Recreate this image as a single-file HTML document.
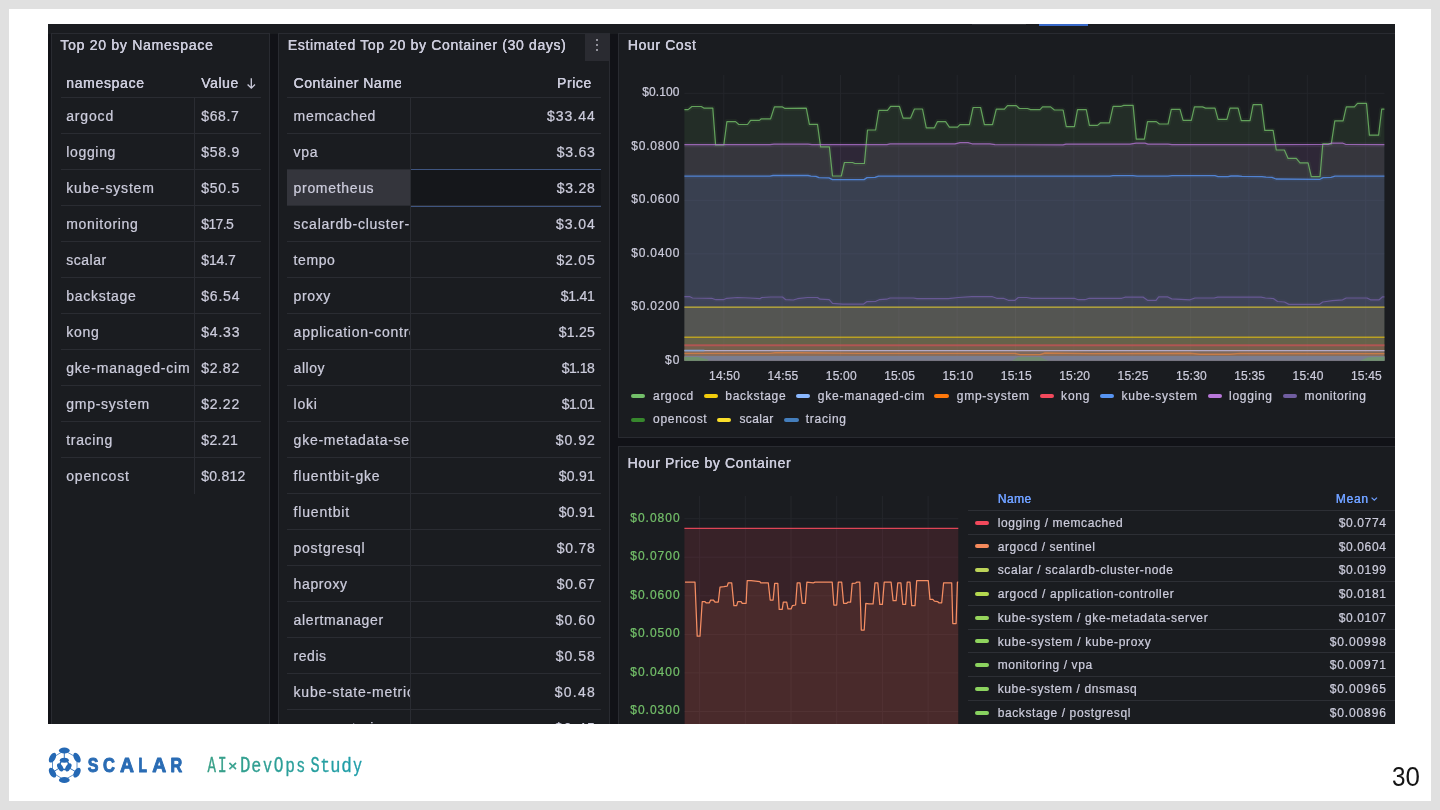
<!DOCTYPE html>
<html><head><meta charset="utf-8"><title>slide 30</title>
<style>
html,body{margin:0;padding:0;}
body{width:1440px;height:810px;overflow:hidden;background:#e0e0e0;font-family:"Liberation Sans",sans-serif;position:relative;}
#slide{position:absolute;left:9px;top:9px;width:1422px;height:792px;background:#fff;}
#shot{position:absolute;left:48px;top:24px;width:1347px;height:700px;overflow:hidden;background:#111217;}
#in{position:absolute;left:-48px;top:-24px;width:1440px;height:810px;will-change:transform;}
.t{position:absolute;white-space:nowrap;-webkit-text-stroke:0.22px currentColor;}
.r{position:absolute;}
.p{position:absolute;background:#1a1c20;border:1px solid #292b31;box-sizing:border-box;}
svg{position:absolute;left:0;top:0;overflow:visible;}
</style></head><body>
<div id="slide"></div>
<div id="shot"><div id="in">
<div class="r" style="left:48.00px;top:24.00px;width:1347.00px;height:9.50px;background:#1a1c20;"></div>
<div class="r" style="left:972.00px;top:24.00px;width:54.00px;height:1.30px;background:#2f3136;"></div>
<div class="r" style="left:1038.80px;top:24.00px;width:49.00px;height:1.50px;background:#3869c9;"></div>
<div class="p" style="left:51px;top:33px;width:219px;height:720px;"></div>
<div class="p" style="left:278px;top:33px;width:332px;height:720px;"></div>
<div class="p" style="left:618px;top:33px;width:800px;height:405px;"></div>
<div class="p" style="left:618px;top:445.5px;width:800px;height:320px;"></div>
<div class="t" style="top:35.30px;font-size:14px;line-height:20px;color:#ccccdc;letter-spacing:0.733px;left:60.30px;text-shadow:0.12px 0 0 currentColor;">Top 20 by Namespace</div>
<div class="t" style="top:35.30px;font-size:14px;line-height:20px;color:#ccccdc;letter-spacing:0.646px;left:287.80px;text-shadow:0.12px 0 0 currentColor;">Estimated Top 20 by Container (30 days)</div>
<div class="t" style="top:35.30px;font-size:14px;line-height:20px;color:#ccccdc;letter-spacing:0.622px;left:627.80px;text-shadow:0.12px 0 0 currentColor;">Hour Cost</div>
<div class="t" style="top:453.30px;font-size:14px;line-height:20px;color:#ccccdc;letter-spacing:0.618px;left:627.60px;text-shadow:0.12px 0 0 currentColor;">Hour Price by Container</div>
<div class="r" style="left:585.30px;top:34.00px;width:24.50px;height:26.50px;background:#2a2b31;"></div>
<div class="r" style="left:596.00px;top:39.20px;width:2.10px;height:2.10px;background:#b4b4be;border-radius:1px;"></div>
<div class="r" style="left:596.00px;top:44.00px;width:2.10px;height:2.10px;background:#b4b4be;border-radius:1px;"></div>
<div class="r" style="left:596.00px;top:48.80px;width:2.10px;height:2.10px;background:#b4b4be;border-radius:1px;"></div>
<div class="t" style="top:73.00px;font-size:14px;line-height:20px;color:#ccccdc;letter-spacing:0.677px;left:66.20px;text-shadow:0.12px 0 0 currentColor;">namespace</div>
<div class="t" style="top:73.00px;font-size:14px;line-height:20px;color:#ccccdc;letter-spacing:0.580px;left:201.20px;text-shadow:0.12px 0 0 currentColor;">Value</div>
<svg width="1440" height="810" viewBox="0 0 1440 810"><path d="M251.3 78.3 V88 M247.6 84.5 L251.3 88.2 L255 84.5" fill="none" stroke="#ccccdc" stroke-width="1.3"/></svg>
<div class="t" style="top:106.05px;font-size:14px;line-height:20px;color:#ccccdc;letter-spacing:0.838px;left:66.20px;">argocd</div>
<div class="t" style="top:106.05px;font-size:14px;line-height:20px;color:#ccccdc;letter-spacing:0.666px;left:201.20px;">$68.7</div>
<div class="t" style="top:142.05px;font-size:14px;line-height:20px;color:#ccccdc;letter-spacing:0.674px;left:66.20px;">logging</div>
<div class="t" style="top:142.05px;font-size:14px;line-height:20px;color:#ccccdc;letter-spacing:0.741px;left:201.20px;">$58.9</div>
<div class="t" style="top:178.05px;font-size:14px;line-height:20px;color:#ccccdc;letter-spacing:0.834px;left:66.20px;">kube-system</div>
<div class="t" style="top:178.05px;font-size:14px;line-height:20px;color:#ccccdc;letter-spacing:0.741px;left:201.20px;">$50.5</div>
<div class="t" style="top:214.05px;font-size:14px;line-height:20px;color:#ccccdc;letter-spacing:0.704px;left:66.20px;">monitoring</div>
<div class="t" style="top:214.05px;font-size:14px;line-height:20px;color:#ccccdc;letter-spacing:-0.584px;left:201.20px;">$17.5</div>
<div class="t" style="top:250.05px;font-size:14px;line-height:20px;color:#ccccdc;letter-spacing:0.531px;left:66.20px;">scalar</div>
<div class="t" style="top:250.05px;font-size:14px;line-height:20px;color:#ccccdc;letter-spacing:-0.084px;left:201.20px;">$14.7</div>
<div class="t" style="top:286.05px;font-size:14px;line-height:20px;color:#ccccdc;letter-spacing:0.735px;left:66.20px;">backstage</div>
<div class="t" style="top:286.05px;font-size:14px;line-height:20px;color:#ccccdc;letter-spacing:0.816px;left:201.20px;">$6.54</div>
<div class="t" style="top:322.05px;font-size:14px;line-height:20px;color:#ccccdc;letter-spacing:0.714px;left:66.20px;">kong</div>
<div class="t" style="top:322.05px;font-size:14px;line-height:20px;color:#ccccdc;letter-spacing:0.816px;left:201.20px;">$4.33</div>
<div class="t" style="top:358.05px;font-size:14px;line-height:20px;color:#ccccdc;letter-spacing:0.818px;left:66.20px;">gke-managed-cim</div>
<div class="t" style="top:358.05px;font-size:14px;line-height:20px;color:#ccccdc;letter-spacing:0.741px;left:201.20px;">$2.82</div>
<div class="t" style="top:394.05px;font-size:14px;line-height:20px;color:#ccccdc;letter-spacing:0.750px;left:66.20px;">gmp-system</div>
<div class="t" style="top:394.05px;font-size:14px;line-height:20px;color:#ccccdc;letter-spacing:0.741px;left:201.20px;">$2.22</div>
<div class="t" style="top:430.05px;font-size:14px;line-height:20px;color:#ccccdc;letter-spacing:0.696px;left:66.20px;">tracing</div>
<div class="t" style="top:430.05px;font-size:14px;line-height:20px;color:#ccccdc;letter-spacing:0.416px;left:201.20px;">$2.21</div>
<div class="t" style="top:466.05px;font-size:14px;line-height:20px;color:#ccccdc;letter-spacing:0.854px;left:66.20px;">opencost</div>
<div class="t" style="top:466.05px;font-size:14px;line-height:20px;color:#ccccdc;letter-spacing:0.276px;left:201.20px;">$0.812</div>
<div class="r" style="left:61.00px;top:97.20px;width:200.00px;height:1.00px;background:#2a2c32;"></div>
<div class="r" style="left:61.00px;top:133.20px;width:200.00px;height:1.00px;background:#2a2c32;"></div>
<div class="r" style="left:61.00px;top:169.20px;width:200.00px;height:1.00px;background:#2a2c32;"></div>
<div class="r" style="left:61.00px;top:205.20px;width:200.00px;height:1.00px;background:#2a2c32;"></div>
<div class="r" style="left:61.00px;top:241.20px;width:200.00px;height:1.00px;background:#2a2c32;"></div>
<div class="r" style="left:61.00px;top:277.20px;width:200.00px;height:1.00px;background:#2a2c32;"></div>
<div class="r" style="left:61.00px;top:313.20px;width:200.00px;height:1.00px;background:#2a2c32;"></div>
<div class="r" style="left:61.00px;top:349.20px;width:200.00px;height:1.00px;background:#2a2c32;"></div>
<div class="r" style="left:61.00px;top:385.20px;width:200.00px;height:1.00px;background:#2a2c32;"></div>
<div class="r" style="left:61.00px;top:421.20px;width:200.00px;height:1.00px;background:#2a2c32;"></div>
<div class="r" style="left:61.00px;top:457.20px;width:200.00px;height:1.00px;background:#2a2c32;"></div>
<div class="r" style="left:194.00px;top:97.70px;width:1.00px;height:396.00px;background:#2a2c32;"></div>
<div class="r" style="left:287.00px;top:169.50px;width:123.50px;height:36.50px;background:#34353c;"></div>
<div class="r" style="left:410.50px;top:169.50px;width:190.50px;height:36.50px;background:#15171b;"></div>
<div class="r" style="left:287px;top:60px;width:123.3px;height:700px;overflow:hidden;">
<div class="r" style="left:0;top:0;width:114.2px;height:40px;overflow:hidden;">
<div class="t" style="top:13.00px;font-size:14px;line-height:20px;color:#ccccdc;letter-spacing:0.504px;left:6.60px;text-shadow:0.12px 0 0 currentColor;">Container Name</div>
</div>
<div class="t" style="top:46.05px;font-size:14px;line-height:20px;color:#ccccdc;letter-spacing:0.693px;left:6.60px;">memcached</div>
<div class="t" style="top:82.05px;font-size:14px;line-height:20px;color:#ccccdc;letter-spacing:0.714px;left:6.60px;">vpa</div>
<div class="t" style="top:118.05px;font-size:14px;line-height:20px;color:#ccccdc;letter-spacing:0.674px;left:6.60px;">prometheus</div>
<div class="t" style="top:154.05px;font-size:14px;line-height:20px;color:#ccccdc;letter-spacing:0.751px;left:6.60px;">scalardb-cluster-</div>
<div class="t" style="top:190.05px;font-size:14px;line-height:20px;color:#ccccdc;letter-spacing:0.597px;left:6.60px;">tempo</div>
<div class="t" style="top:226.05px;font-size:14px;line-height:20px;color:#ccccdc;letter-spacing:0.616px;left:6.60px;">proxy</div>
<div class="t" style="top:262.05px;font-size:14px;line-height:20px;color:#ccccdc;letter-spacing:0.750px;left:6.60px;">application-contro</div>
<div class="t" style="top:298.05px;font-size:14px;line-height:20px;color:#ccccdc;letter-spacing:0.551px;left:6.60px;">alloy</div>
<div class="t" style="top:334.05px;font-size:14px;line-height:20px;color:#ccccdc;letter-spacing:0.750px;left:6.60px;">loki</div>
<div class="t" style="top:370.05px;font-size:14px;line-height:20px;color:#ccccdc;letter-spacing:0.750px;left:6.60px;">gke-metadata-se</div>
<div class="t" style="top:406.05px;font-size:14px;line-height:20px;color:#ccccdc;letter-spacing:0.811px;left:6.60px;">fluentbit-gke</div>
<div class="t" style="top:442.05px;font-size:14px;line-height:20px;color:#ccccdc;letter-spacing:0.808px;left:6.60px;">fluentbit</div>
<div class="t" style="top:478.05px;font-size:14px;line-height:20px;color:#ccccdc;letter-spacing:0.712px;left:6.60px;">postgresql</div>
<div class="t" style="top:514.05px;font-size:14px;line-height:20px;color:#ccccdc;letter-spacing:0.615px;left:6.60px;">haproxy</div>
<div class="t" style="top:550.05px;font-size:14px;line-height:20px;color:#ccccdc;letter-spacing:0.637px;left:6.60px;">alertmanager</div>
<div class="t" style="top:586.05px;font-size:14px;line-height:20px;color:#ccccdc;letter-spacing:0.538px;left:6.60px;">redis</div>
<div class="t" style="top:622.05px;font-size:14px;line-height:20px;color:#ccccdc;letter-spacing:0.760px;left:6.60px;">kube-state-metrics</div>
<div class="t" style="top:658.05px;font-size:14px;line-height:20px;color:#ccccdc;letter-spacing:0.750px;left:6.60px;">opencost-ui</div>
</div>
<div class="t" style="top:73.00px;font-size:14px;line-height:20px;color:#ccccdc;letter-spacing:0.580px;right:848.22px;text-shadow:0.12px 0 0 currentColor;">Price</div>
<div class="t" style="top:106.05px;font-size:14px;line-height:20px;color:#ccccdc;letter-spacing:0.996px;right:844.30px;">$33.44</div>
<div class="t" style="top:142.05px;font-size:14px;line-height:20px;color:#ccccdc;letter-spacing:0.741px;right:844.56px;">$3.63</div>
<div class="t" style="top:178.05px;font-size:14px;line-height:20px;color:#ccccdc;letter-spacing:0.741px;right:844.56px;">$3.28</div>
<div class="t" style="top:214.05px;font-size:14px;line-height:20px;color:#ccccdc;letter-spacing:0.891px;right:844.41px;">$3.04</div>
<div class="t" style="top:250.05px;font-size:14px;line-height:20px;color:#ccccdc;letter-spacing:0.816px;right:844.48px;">$2.05</div>
<div class="t" style="top:286.05px;font-size:14px;line-height:20px;color:#ccccdc;letter-spacing:-0.259px;right:845.56px;">$1.41</div>
<div class="t" style="top:322.05px;font-size:14px;line-height:20px;color:#ccccdc;letter-spacing:0.241px;right:845.06px;">$1.25</div>
<div class="t" style="top:358.05px;font-size:14px;line-height:20px;color:#ccccdc;letter-spacing:-0.509px;right:845.81px;">$1.18</div>
<div class="t" style="top:394.05px;font-size:14px;line-height:20px;color:#ccccdc;letter-spacing:-0.509px;right:845.81px;">$1.01</div>
<div class="t" style="top:430.05px;font-size:14px;line-height:20px;color:#ccccdc;letter-spacing:0.991px;right:844.31px;">$0.92</div>
<div class="t" style="top:466.05px;font-size:14px;line-height:20px;color:#ccccdc;letter-spacing:0.241px;right:845.06px;">$0.91</div>
<div class="t" style="top:502.05px;font-size:14px;line-height:20px;color:#ccccdc;letter-spacing:0.241px;right:845.06px;">$0.91</div>
<div class="t" style="top:538.05px;font-size:14px;line-height:20px;color:#ccccdc;letter-spacing:0.741px;right:844.56px;">$0.78</div>
<div class="t" style="top:574.05px;font-size:14px;line-height:20px;color:#ccccdc;letter-spacing:0.741px;right:844.56px;">$0.67</div>
<div class="t" style="top:610.05px;font-size:14px;line-height:20px;color:#ccccdc;letter-spacing:0.991px;right:844.31px;">$0.60</div>
<div class="t" style="top:646.05px;font-size:14px;line-height:20px;color:#ccccdc;letter-spacing:0.991px;right:844.31px;">$0.58</div>
<div class="t" style="top:682.05px;font-size:14px;line-height:20px;color:#ccccdc;letter-spacing:1.241px;right:844.06px;">$0.48</div>
<div class="t" style="top:718.05px;font-size:14px;line-height:20px;color:#ccccdc;letter-spacing:1.241px;right:844.06px;">$0.45</div>
<div class="r" style="left:287.00px;top:97.20px;width:314.00px;height:1.00px;background:#2a2c32;"></div>
<div class="r" style="left:287.00px;top:133.20px;width:314.00px;height:1.00px;background:#2a2c32;"></div>
<div class="r" style="left:287.00px;top:169.20px;width:314.00px;height:1.00px;background:#2a2c32;"></div>
<div class="r" style="left:287.00px;top:205.20px;width:314.00px;height:1.00px;background:#2a2c32;"></div>
<div class="r" style="left:287.00px;top:241.20px;width:314.00px;height:1.00px;background:#2a2c32;"></div>
<div class="r" style="left:287.00px;top:277.20px;width:314.00px;height:1.00px;background:#2a2c32;"></div>
<div class="r" style="left:287.00px;top:313.20px;width:314.00px;height:1.00px;background:#2a2c32;"></div>
<div class="r" style="left:287.00px;top:349.20px;width:314.00px;height:1.00px;background:#2a2c32;"></div>
<div class="r" style="left:287.00px;top:385.20px;width:314.00px;height:1.00px;background:#2a2c32;"></div>
<div class="r" style="left:287.00px;top:421.20px;width:314.00px;height:1.00px;background:#2a2c32;"></div>
<div class="r" style="left:287.00px;top:457.20px;width:314.00px;height:1.00px;background:#2a2c32;"></div>
<div class="r" style="left:287.00px;top:493.20px;width:314.00px;height:1.00px;background:#2a2c32;"></div>
<div class="r" style="left:287.00px;top:529.20px;width:314.00px;height:1.00px;background:#2a2c32;"></div>
<div class="r" style="left:287.00px;top:565.20px;width:314.00px;height:1.00px;background:#2a2c32;"></div>
<div class="r" style="left:287.00px;top:601.20px;width:314.00px;height:1.00px;background:#2a2c32;"></div>
<div class="r" style="left:287.00px;top:637.20px;width:314.00px;height:1.00px;background:#2a2c32;"></div>
<div class="r" style="left:287.00px;top:673.20px;width:314.00px;height:1.00px;background:#2a2c32;"></div>
<div class="r" style="left:287.00px;top:709.20px;width:314.00px;height:1.00px;background:#2a2c32;"></div>
<div class="r" style="left:287.00px;top:745.20px;width:314.00px;height:1.00px;background:#2a2c32;"></div>
<div class="r" style="left:410.00px;top:97.70px;width:1.00px;height:700.00px;background:#2a2c32;"></div>
<div class="r" style="left:410.50px;top:169.20px;width:190.50px;height:1.10px;background:#3f5580;"></div>
<div class="r" style="left:410.50px;top:205.60px;width:190.50px;height:1.10px;background:#3f5580;"></div>
<svg width="1440" height="810" viewBox="0 0 1440 810">
<line x1="684.4" y1="360.8" x2="1384.5" y2="360.8" stroke="#24262b" stroke-width="1"/>
<line x1="684.4" y1="307.3" x2="1384.5" y2="307.3" stroke="#24262b" stroke-width="1"/>
<line x1="684.4" y1="253.8" x2="1384.5" y2="253.8" stroke="#24262b" stroke-width="1"/>
<line x1="684.4" y1="200.3" x2="1384.5" y2="200.3" stroke="#24262b" stroke-width="1"/>
<line x1="684.4" y1="146.8" x2="1384.5" y2="146.8" stroke="#24262b" stroke-width="1"/>
<line x1="684.4" y1="93.3" x2="1384.5" y2="93.3" stroke="#24262b" stroke-width="1"/>
<line x1="723.8" y1="75" x2="723.8" y2="360.8" stroke="#24262b" stroke-width="1"/>
<line x1="782.1" y1="75" x2="782.1" y2="360.8" stroke="#24262b" stroke-width="1"/>
<line x1="840.5" y1="75" x2="840.5" y2="360.8" stroke="#24262b" stroke-width="1"/>
<line x1="898.8" y1="75" x2="898.8" y2="360.8" stroke="#24262b" stroke-width="1"/>
<line x1="957.2" y1="75" x2="957.2" y2="360.8" stroke="#24262b" stroke-width="1"/>
<line x1="1015.5" y1="75" x2="1015.5" y2="360.8" stroke="#24262b" stroke-width="1"/>
<line x1="1073.9" y1="75" x2="1073.9" y2="360.8" stroke="#24262b" stroke-width="1"/>
<line x1="1132.2" y1="75" x2="1132.2" y2="360.8" stroke="#24262b" stroke-width="1"/>
<line x1="1190.6" y1="75" x2="1190.6" y2="360.8" stroke="#24262b" stroke-width="1"/>
<line x1="1248.9" y1="75" x2="1248.9" y2="360.8" stroke="#24262b" stroke-width="1"/>
<line x1="1307.3" y1="75" x2="1307.3" y2="360.8" stroke="#24262b" stroke-width="1"/>
<line x1="1365.7" y1="75" x2="1365.7" y2="360.8" stroke="#24262b" stroke-width="1"/>
<polygon points="684.4,109.6 688.1,109.6 691.9,106.5 701.3,106.5 703.8,108.1 712.8,108.1 715.6,145.0 723.8,145.0 726.9,121.6 735.6,121.6 738.8,124.5 747.5,124.5 750.6,120.4 759.4,120.4 761.3,118.8 770.6,118.8 774.4,106.9 782.5,106.9 785.0,108.4 806.3,108.1 809.4,124.4 817.5,124.4 820.6,146.9 829.4,146.9 832.5,176.0 841.3,176.0 844.4,162.5 852.5,162.5 855.0,163.5 864.4,163.5 867.5,130.0 875.6,130.0 878.8,110.4 887.5,110.4 890.6,106.3 899.4,106.3 903.1,118.1 910.6,118.1 914.4,109.0 922.5,109.0 926.3,127.8 934.4,127.8 937.5,121.6 945.6,121.6 949.4,127.1 957.5,127.1 960.0,124.6 969.4,124.6 973.1,107.5 980.6,107.5 984.4,124.6 992.5,124.6 996.3,109.1 1004.4,109.1 1007.5,105.6 1016.3,105.6 1019.4,108.5 1027.5,108.5 1030.6,109.6 1040.0,109.6 1042.5,106.9 1050.6,106.9 1054.4,110.0 1063.1,110.0 1066.3,126.6 1074.4,126.6 1077.5,109.6 1086.3,109.6 1089.4,125.4 1097.5,125.4 1100.6,122.8 1109.4,122.8 1113.1,106.3 1121.3,106.3 1123.8,105.4 1133.1,105.4 1136.3,139.1 1144.4,139.1 1147.5,121.6 1156.3,121.6 1159.4,124.0 1168.1,124.0 1171.3,109.4 1180.0,109.4 1183.1,120.4 1191.3,120.4 1194.4,106.9 1202.5,106.9 1205.6,108.1 1215.0,108.1 1218.1,119.4 1226.9,119.4 1230.0,108.1 1238.1,108.1 1241.3,120.6 1250.0,120.6 1253.1,104.6 1261.5,104.6 1264.8,130.4 1273.1,130.4 1276.3,150.0 1284.4,150.0 1288.1,158.4 1296.3,158.4 1300.0,162.8 1308.1,162.8 1311.3,176.6 1320.0,176.6 1322.8,143.8 1331.3,143.8 1334.8,120.9 1343.1,120.9 1346.3,106.9 1354.4,106.9 1357.5,103.4 1366.5,103.4 1369.4,135.1 1378.6,135.1 1381.7,109.2 1384.4,109.2 1384.4,360.8 684.4,360.8" fill="#73BF69" fill-opacity="0.105"/>
<polygon points="684.4,144.7 770.0,144.7 774.0,144.1 808.0,144.1 812.0,144.7 887.0,144.7 890.0,143.9 955.0,143.9 960.0,142.6 968.0,142.6 972.0,143.8 990.0,143.8 995.0,144.7 1063.0,144.9 1066.0,144.1 1130.0,144.1 1136.0,143.1 1145.0,143.1 1148.0,144.1 1168.0,144.1 1172.0,144.6 1328.0,144.5 1331.0,143.2 1343.0,143.2 1346.0,144.5 1384.4,144.7 1384.4,360.8 684.4,360.8" fill="#B877D9" fill-opacity="0.13"/>
<polygon points="684.4,176.2 770.0,176.2 773.0,175.5 808.0,175.5 811.0,176.2 816.0,176.3 819.0,177.6 829.0,177.8 832.5,179.6 864.0,179.6 867.0,177.6 875.0,177.4 878.5,176.1 1110.0,176.1 1113.0,175.6 1133.0,175.6 1137.0,176.2 1168.0,176.2 1172.0,175.7 1215.0,175.7 1218.0,176.6 1228.0,176.6 1231.0,176.0 1238.0,176.0 1242.0,176.4 1262.0,176.6 1266.0,177.2 1272.0,177.4 1276.0,179.0 1320.0,179.3 1323.0,177.6 1331.0,177.4 1335.0,176.2 1384.4,176.2 1384.4,360.8 684.4,360.8" fill="#5794F2" fill-opacity="0.105"/>
<polygon points="684.4,296.7 690.0,296.7 692.5,298.0 711.7,298.3 715.8,299.7 723.3,299.7 726.7,298.3 737.5,297.5 750.0,298.0 760.0,298.7 761.7,297.5 770.8,297.0 782.5,297.0 785.8,299.7 793.3,300.0 797.5,298.7 807.5,297.5 817.5,297.5 820.0,299.2 829.2,299.7 832.5,303.3 842.5,304.2 863.3,304.2 866.7,301.7 875.8,301.3 879.2,299.7 886.7,299.2 890.0,298.0 913.3,298.0 917.0,298.7 948.3,298.7 958.3,297.5 971.7,296.7 992.5,296.7 996.7,298.3 1003.3,298.3 1008.3,300.3 1015.0,300.3 1018.3,297.5 1026.7,297.5 1031.7,298.3 1074.2,298.3 1078.3,299.7 1085.0,299.7 1089.2,298.3 1121.7,298.3 1125.0,297.2 1143.3,297.2 1147.5,300.3 1156.0,300.3 1158.7,296.8 1167.4,296.8 1171.7,298.9 1190.0,299.8 1195.0,298.0 1214.2,298.0 1217.7,297.2 1261.0,297.2 1265.5,298.0 1273.3,298.5 1277.6,301.5 1284.5,302.0 1288.9,304.4 1319.3,304.4 1322.7,302.0 1332.3,300.6 1342.7,299.8 1346.2,298.0 1367.0,298.0 1370.5,299.8 1379.2,299.8 1382.6,296.8 1384.4,296.8 1384.4,360.8 684.4,360.8" fill="#705DA0" fill-opacity="0.105"/>
<polygon points="684.4,307.1 1384.5,307.1 1384.5,360.8 684.4,360.8" fill="#FADE2A" fill-opacity="0.12"/>
<polygon points="684.4,337.2 1384.5,337.2 1384.5,360.8 684.4,360.8" fill="#F2CC0C" fill-opacity="0.105"/>
<polygon points="684.4,345.2 1384.5,345.2 1384.5,360.8 684.4,360.8" fill="#F2495C" fill-opacity="0.105"/>
<polygon points="684.4,350.6 1384.5,350.6 1384.5,360.8 684.4,360.8" fill="#C9C0E8" fill-opacity="0.105"/>
<polygon points="684.4,353.4 770.0,353.4 775.0,352.8 800.0,352.8 860.0,353.4 1015.0,353.4 1020.0,354.6 1040.0,354.6 1045.0,353.0 1090.0,353.6 1190.0,353.2 1200.0,354.2 1230.0,354.2 1240.0,353.4 1384.4,353.6 1384.4,360.8 684.4,360.8" fill="#FF8A3A" fill-opacity="0.105"/>
<polyline points="684.4,109.6 688.1,109.6 691.9,106.5 701.3,106.5 703.8,108.1 712.8,108.1 715.6,145.0 723.8,145.0 726.9,121.6 735.6,121.6 738.8,124.5 747.5,124.5 750.6,120.4 759.4,120.4 761.3,118.8 770.6,118.8 774.4,106.9 782.5,106.9 785.0,108.4 806.3,108.1 809.4,124.4 817.5,124.4 820.6,146.9 829.4,146.9 832.5,176.0 841.3,176.0 844.4,162.5 852.5,162.5 855.0,163.5 864.4,163.5 867.5,130.0 875.6,130.0 878.8,110.4 887.5,110.4 890.6,106.3 899.4,106.3 903.1,118.1 910.6,118.1 914.4,109.0 922.5,109.0 926.3,127.8 934.4,127.8 937.5,121.6 945.6,121.6 949.4,127.1 957.5,127.1 960.0,124.6 969.4,124.6 973.1,107.5 980.6,107.5 984.4,124.6 992.5,124.6 996.3,109.1 1004.4,109.1 1007.5,105.6 1016.3,105.6 1019.4,108.5 1027.5,108.5 1030.6,109.6 1040.0,109.6 1042.5,106.9 1050.6,106.9 1054.4,110.0 1063.1,110.0 1066.3,126.6 1074.4,126.6 1077.5,109.6 1086.3,109.6 1089.4,125.4 1097.5,125.4 1100.6,122.8 1109.4,122.8 1113.1,106.3 1121.3,106.3 1123.8,105.4 1133.1,105.4 1136.3,139.1 1144.4,139.1 1147.5,121.6 1156.3,121.6 1159.4,124.0 1168.1,124.0 1171.3,109.4 1180.0,109.4 1183.1,120.4 1191.3,120.4 1194.4,106.9 1202.5,106.9 1205.6,108.1 1215.0,108.1 1218.1,119.4 1226.9,119.4 1230.0,108.1 1238.1,108.1 1241.3,120.6 1250.0,120.6 1253.1,104.6 1261.5,104.6 1264.8,130.4 1273.1,130.4 1276.3,150.0 1284.4,150.0 1288.1,158.4 1296.3,158.4 1300.0,162.8 1308.1,162.8 1311.3,176.6 1320.0,176.6 1322.8,143.8 1331.3,143.8 1334.8,120.9 1343.1,120.9 1346.3,106.9 1354.4,106.9 1357.5,103.4 1366.5,103.4 1369.4,135.1 1378.6,135.1 1381.7,109.2 1384.4,109.2" fill="none" stroke="#73BF69" stroke-width="5" stroke-opacity="0.07" stroke-linejoin="round"/>
<polyline points="684.4,144.7 770.0,144.7 774.0,144.1 808.0,144.1 812.0,144.7 887.0,144.7 890.0,143.9 955.0,143.9 960.0,142.6 968.0,142.6 972.0,143.8 990.0,143.8 995.0,144.7 1063.0,144.9 1066.0,144.1 1130.0,144.1 1136.0,143.1 1145.0,143.1 1148.0,144.1 1168.0,144.1 1172.0,144.6 1328.0,144.5 1331.0,143.2 1343.0,143.2 1346.0,144.5 1384.4,144.7" fill="none" stroke="#B877D9" stroke-width="5" stroke-opacity="0.07" stroke-linejoin="round"/>
<polyline points="684.4,176.2 770.0,176.2 773.0,175.5 808.0,175.5 811.0,176.2 816.0,176.3 819.0,177.6 829.0,177.8 832.5,179.6 864.0,179.6 867.0,177.6 875.0,177.4 878.5,176.1 1110.0,176.1 1113.0,175.6 1133.0,175.6 1137.0,176.2 1168.0,176.2 1172.0,175.7 1215.0,175.7 1218.0,176.6 1228.0,176.6 1231.0,176.0 1238.0,176.0 1242.0,176.4 1262.0,176.6 1266.0,177.2 1272.0,177.4 1276.0,179.0 1320.0,179.3 1323.0,177.6 1331.0,177.4 1335.0,176.2 1384.4,176.2" fill="none" stroke="#5794F2" stroke-width="5" stroke-opacity="0.07" stroke-linejoin="round"/>
<polyline points="684.4,296.7 690.0,296.7 692.5,298.0 711.7,298.3 715.8,299.7 723.3,299.7 726.7,298.3 737.5,297.5 750.0,298.0 760.0,298.7 761.7,297.5 770.8,297.0 782.5,297.0 785.8,299.7 793.3,300.0 797.5,298.7 807.5,297.5 817.5,297.5 820.0,299.2 829.2,299.7 832.5,303.3 842.5,304.2 863.3,304.2 866.7,301.7 875.8,301.3 879.2,299.7 886.7,299.2 890.0,298.0 913.3,298.0 917.0,298.7 948.3,298.7 958.3,297.5 971.7,296.7 992.5,296.7 996.7,298.3 1003.3,298.3 1008.3,300.3 1015.0,300.3 1018.3,297.5 1026.7,297.5 1031.7,298.3 1074.2,298.3 1078.3,299.7 1085.0,299.7 1089.2,298.3 1121.7,298.3 1125.0,297.2 1143.3,297.2 1147.5,300.3 1156.0,300.3 1158.7,296.8 1167.4,296.8 1171.7,298.9 1190.0,299.8 1195.0,298.0 1214.2,298.0 1217.7,297.2 1261.0,297.2 1265.5,298.0 1273.3,298.5 1277.6,301.5 1284.5,302.0 1288.9,304.4 1319.3,304.4 1322.7,302.0 1332.3,300.6 1342.7,299.8 1346.2,298.0 1367.0,298.0 1370.5,299.8 1379.2,299.8 1382.6,296.8 1384.4,296.8" fill="none" stroke="#705DA0" stroke-width="5" stroke-opacity="0.07" stroke-linejoin="round"/>
<polyline points="684.4,109.6 688.1,109.6 691.9,106.5 701.3,106.5 703.8,108.1 712.8,108.1 715.6,145.0 723.8,145.0 726.9,121.6 735.6,121.6 738.8,124.5 747.5,124.5 750.6,120.4 759.4,120.4 761.3,118.8 770.6,118.8 774.4,106.9 782.5,106.9 785.0,108.4 806.3,108.1 809.4,124.4 817.5,124.4 820.6,146.9 829.4,146.9 832.5,176.0 841.3,176.0 844.4,162.5 852.5,162.5 855.0,163.5 864.4,163.5 867.5,130.0 875.6,130.0 878.8,110.4 887.5,110.4 890.6,106.3 899.4,106.3 903.1,118.1 910.6,118.1 914.4,109.0 922.5,109.0 926.3,127.8 934.4,127.8 937.5,121.6 945.6,121.6 949.4,127.1 957.5,127.1 960.0,124.6 969.4,124.6 973.1,107.5 980.6,107.5 984.4,124.6 992.5,124.6 996.3,109.1 1004.4,109.1 1007.5,105.6 1016.3,105.6 1019.4,108.5 1027.5,108.5 1030.6,109.6 1040.0,109.6 1042.5,106.9 1050.6,106.9 1054.4,110.0 1063.1,110.0 1066.3,126.6 1074.4,126.6 1077.5,109.6 1086.3,109.6 1089.4,125.4 1097.5,125.4 1100.6,122.8 1109.4,122.8 1113.1,106.3 1121.3,106.3 1123.8,105.4 1133.1,105.4 1136.3,139.1 1144.4,139.1 1147.5,121.6 1156.3,121.6 1159.4,124.0 1168.1,124.0 1171.3,109.4 1180.0,109.4 1183.1,120.4 1191.3,120.4 1194.4,106.9 1202.5,106.9 1205.6,108.1 1215.0,108.1 1218.1,119.4 1226.9,119.4 1230.0,108.1 1238.1,108.1 1241.3,120.6 1250.0,120.6 1253.1,104.6 1261.5,104.6 1264.8,130.4 1273.1,130.4 1276.3,150.0 1284.4,150.0 1288.1,158.4 1296.3,158.4 1300.0,162.8 1308.1,162.8 1311.3,176.6 1320.0,176.6 1322.8,143.8 1331.3,143.8 1334.8,120.9 1343.1,120.9 1346.3,106.9 1354.4,106.9 1357.5,103.4 1366.5,103.4 1369.4,135.1 1378.6,135.1 1381.7,109.2 1384.4,109.2" fill="none" stroke="#73BF69" stroke-width="1.2" stroke-opacity="0.8" stroke-linejoin="round"/>
<polyline points="684.4,144.7 770.0,144.7 774.0,144.1 808.0,144.1 812.0,144.7 887.0,144.7 890.0,143.9 955.0,143.9 960.0,142.6 968.0,142.6 972.0,143.8 990.0,143.8 995.0,144.7 1063.0,144.9 1066.0,144.1 1130.0,144.1 1136.0,143.1 1145.0,143.1 1148.0,144.1 1168.0,144.1 1172.0,144.6 1328.0,144.5 1331.0,143.2 1343.0,143.2 1346.0,144.5 1384.4,144.7" fill="none" stroke="#B877D9" stroke-width="1.2" stroke-opacity="0.75" stroke-linejoin="round"/>
<polyline points="684.4,176.2 770.0,176.2 773.0,175.5 808.0,175.5 811.0,176.2 816.0,176.3 819.0,177.6 829.0,177.8 832.5,179.6 864.0,179.6 867.0,177.6 875.0,177.4 878.5,176.1 1110.0,176.1 1113.0,175.6 1133.0,175.6 1137.0,176.2 1168.0,176.2 1172.0,175.7 1215.0,175.7 1218.0,176.6 1228.0,176.6 1231.0,176.0 1238.0,176.0 1242.0,176.4 1262.0,176.6 1266.0,177.2 1272.0,177.4 1276.0,179.0 1320.0,179.3 1323.0,177.6 1331.0,177.4 1335.0,176.2 1384.4,176.2" fill="none" stroke="#5794F2" stroke-width="1.3" stroke-opacity="0.8" stroke-linejoin="round"/>
<polyline points="684.4,296.7 690.0,296.7 692.5,298.0 711.7,298.3 715.8,299.7 723.3,299.7 726.7,298.3 737.5,297.5 750.0,298.0 760.0,298.7 761.7,297.5 770.8,297.0 782.5,297.0 785.8,299.7 793.3,300.0 797.5,298.7 807.5,297.5 817.5,297.5 820.0,299.2 829.2,299.7 832.5,303.3 842.5,304.2 863.3,304.2 866.7,301.7 875.8,301.3 879.2,299.7 886.7,299.2 890.0,298.0 913.3,298.0 917.0,298.7 948.3,298.7 958.3,297.5 971.7,296.7 992.5,296.7 996.7,298.3 1003.3,298.3 1008.3,300.3 1015.0,300.3 1018.3,297.5 1026.7,297.5 1031.7,298.3 1074.2,298.3 1078.3,299.7 1085.0,299.7 1089.2,298.3 1121.7,298.3 1125.0,297.2 1143.3,297.2 1147.5,300.3 1156.0,300.3 1158.7,296.8 1167.4,296.8 1171.7,298.9 1190.0,299.8 1195.0,298.0 1214.2,298.0 1217.7,297.2 1261.0,297.2 1265.5,298.0 1273.3,298.5 1277.6,301.5 1284.5,302.0 1288.9,304.4 1319.3,304.4 1322.7,302.0 1332.3,300.6 1342.7,299.8 1346.2,298.0 1367.0,298.0 1370.5,299.8 1379.2,299.8 1382.6,296.8 1384.4,296.8" fill="none" stroke="#705DA0" stroke-width="1.2" stroke-opacity="0.85" stroke-linejoin="round"/>
<polyline points="684.4,307.1 1384.5,307.1" fill="none" stroke="#FADE2A" stroke-width="1.4" stroke-opacity="0.7" stroke-linejoin="round"/>
<polyline points="684.4,337.2 1384.5,337.2" fill="none" stroke="#F2CC0C" stroke-width="1.5" stroke-opacity="0.62" stroke-linejoin="round"/>
<polyline points="684.4,345.2 1384.5,345.2" fill="none" stroke="#F2495C" stroke-width="2.0" stroke-opacity="0.5" stroke-linejoin="round"/>
<polyline points="684.4,350.6 1384.5,350.6" fill="none" stroke="#C9C0E8" stroke-width="1.4" stroke-opacity="0.75" stroke-linejoin="round"/>
<polyline points="684.4,353.4 770.0,353.4 775.0,352.8 800.0,352.8 860.0,353.4 1015.0,353.4 1020.0,354.6 1040.0,354.6 1045.0,353.0 1090.0,353.6 1190.0,353.2 1200.0,354.2 1230.0,354.2 1240.0,353.4 1384.4,353.6" fill="none" stroke="#FF8A3A" stroke-width="1.4" stroke-opacity="0.55" stroke-linejoin="round"/>
<rect x="684.4" y="355.9" width="700.1" height="4.9" fill="#78809a" fill-opacity="0.85"/>
<polygon points="684.4,357.0 698,357.0 708,359.5 708,360.8 684.4,360.8" fill="#6a9a5e" fill-opacity="0.7"/>
<polygon points="1012,360.8 1018,357 1040,357 1048,360.8" fill="#6f8f6a" fill-opacity="0.8"/>
<polygon points="1360,360.8 1368,357.2 1384.5,356.8 1384.5,360.8" fill="#6f9a6a" fill-opacity="0.8"/>
<rect x="684.4" y="349.6" width="20" height="1.8" fill="#7aa3d6" fill-opacity="0.7"/>
<line x1="684.4" y1="518.7" x2="958.3" y2="518.7" stroke="#24262b" stroke-width="1"/>
<line x1="684.4" y1="557.2" x2="958.3" y2="557.2" stroke="#24262b" stroke-width="1"/>
<line x1="684.4" y1="595.8" x2="958.3" y2="595.8" stroke="#24262b" stroke-width="1"/>
<line x1="684.4" y1="634.4" x2="958.3" y2="634.4" stroke="#24262b" stroke-width="1"/>
<line x1="684.4" y1="672.9" x2="958.3" y2="672.9" stroke="#24262b" stroke-width="1"/>
<line x1="684.4" y1="711.5" x2="958.3" y2="711.5" stroke="#24262b" stroke-width="1"/>
<line x1="699.6" y1="496" x2="699.6" y2="760" stroke="#24262b" stroke-width="1"/>
<line x1="745.3" y1="496" x2="745.3" y2="760" stroke="#24262b" stroke-width="1"/>
<line x1="791.0" y1="496" x2="791.0" y2="760" stroke="#24262b" stroke-width="1"/>
<line x1="836.7" y1="496" x2="836.7" y2="760" stroke="#24262b" stroke-width="1"/>
<line x1="882.4" y1="496" x2="882.4" y2="760" stroke="#24262b" stroke-width="1"/>
<line x1="928.1" y1="496" x2="928.1" y2="760" stroke="#24262b" stroke-width="1"/>
<polygon points="684.4,528.3 958.3,528.3 958.3,760.0 684.4,760.0" fill="#F2495C" fill-opacity="0.14"/>
<polygon points="685.0,582.2 695.0,582.2 697.2,636.1 700.0,636.1 702.2,601.7 705.0,601.7 706.1,602.8 709.4,602.8 710.6,600.0 713.3,600.0 715.0,602.0 718.3,602.0 720.0,587.2 723.9,586.7 727.2,586.1 728.3,582.8 731.7,582.8 733.9,605.6 736.7,605.6 737.8,601.7 741.1,601.7 742.2,603.3 746.1,603.3 747.2,580.6 751.1,580.6 760.0,581.7 760.6,582.8 768.3,582.8 770.2,600.0 773.1,600.0 774.7,583.3 777.8,583.3 779.2,609.4 782.2,609.4 783.3,602.2 786.7,602.2 788.0,608.9 791.1,608.9 792.4,605.6 795.6,605.0 797.2,582.8 800.0,582.8 802.2,603.3 805.3,603.3 806.9,582.2 813.3,582.8 815.0,582.2 832.2,582.2 833.9,605.0 836.7,605.0 838.3,582.2 841.7,582.2 843.6,603.3 846.7,603.3 847.8,602.2 850.6,602.2 852.2,583.3 855.6,583.1 856.7,582.2 859.8,582.2 861.3,630.0 864.2,630.0 865.8,603.3 868.9,603.9 873.1,603.9 875.0,582.8 877.8,582.8 879.8,604.4 882.4,604.4 884.2,582.2 891.1,582.2 893.1,600.6 896.1,600.6 897.8,582.8 900.9,582.8 902.8,604.4 905.6,604.4 907.2,582.2 910.0,582.2 911.7,605.6 915.0,605.6 916.7,580.6 928.3,580.6 930.0,599.4 932.8,599.4 934.4,601.1 937.8,601.7 938.9,602.8 941.7,602.8 943.6,582.8 951.7,582.8 952.8,623.6 956.1,623.6 957.4,582.2 958.2,582.2 958.2,760.0 685.0,760.0" fill="#FF8A50" fill-opacity="0.09"/>
<polyline points="684.4,528.3 958.3,528.3" fill="none" stroke="#F2495C" stroke-width="1.3" stroke-opacity="0.9" stroke-linejoin="round"/>
<polyline points="685.0,582.2 695.0,582.2 697.2,636.1 700.0,636.1 702.2,601.7 705.0,601.7 706.1,602.8 709.4,602.8 710.6,600.0 713.3,600.0 715.0,602.0 718.3,602.0 720.0,587.2 723.9,586.7 727.2,586.1 728.3,582.8 731.7,582.8 733.9,605.6 736.7,605.6 737.8,601.7 741.1,601.7 742.2,603.3 746.1,603.3 747.2,580.6 751.1,580.6 760.0,581.7 760.6,582.8 768.3,582.8 770.2,600.0 773.1,600.0 774.7,583.3 777.8,583.3 779.2,609.4 782.2,609.4 783.3,602.2 786.7,602.2 788.0,608.9 791.1,608.9 792.4,605.6 795.6,605.0 797.2,582.8 800.0,582.8 802.2,603.3 805.3,603.3 806.9,582.2 813.3,582.8 815.0,582.2 832.2,582.2 833.9,605.0 836.7,605.0 838.3,582.2 841.7,582.2 843.6,603.3 846.7,603.3 847.8,602.2 850.6,602.2 852.2,583.3 855.6,583.1 856.7,582.2 859.8,582.2 861.3,630.0 864.2,630.0 865.8,603.3 868.9,603.9 873.1,603.9 875.0,582.8 877.8,582.8 879.8,604.4 882.4,604.4 884.2,582.2 891.1,582.2 893.1,600.6 896.1,600.6 897.8,582.8 900.9,582.8 902.8,604.4 905.6,604.4 907.2,582.2 910.0,582.2 911.7,605.6 915.0,605.6 916.7,580.6 928.3,580.6 930.0,599.4 932.8,599.4 934.4,601.1 937.8,601.7 938.9,602.8 941.7,602.8 943.6,582.8 951.7,582.8 952.8,623.6 956.1,623.6 957.4,582.2 958.2,582.2" fill="none" stroke="#FF9466" stroke-width="1.25" stroke-opacity="0.95" stroke-linejoin="round"/>
</svg>
<div class="t" style="top:350.00px;font-size:12px;line-height:20px;color:#ccccdc;letter-spacing:1.152px;left:664.90px;">$0</div>
<div class="t" style="top:296.45px;font-size:12px;line-height:20px;color:#ccccdc;letter-spacing:0.804px;left:631.20px;">$0.0200</div>
<div class="t" style="top:242.90px;font-size:12px;line-height:20px;color:#ccccdc;letter-spacing:0.804px;left:631.20px;">$0.0400</div>
<div class="t" style="top:189.35px;font-size:12px;line-height:20px;color:#ccccdc;letter-spacing:0.804px;left:631.20px;">$0.0600</div>
<div class="t" style="top:135.80px;font-size:12px;line-height:20px;color:#ccccdc;letter-spacing:0.804px;left:631.20px;">$0.0800</div>
<div class="t" style="top:82.25px;font-size:12px;line-height:20px;color:#ccccdc;letter-spacing:0.079px;left:642.30px;">$0.100</div>
<div class="t" style="top:365.50px;font-size:12px;line-height:20px;color:#ccccdc;letter-spacing:0.192px;left:709.10px;">14:50</div>
<div class="t" style="top:365.50px;font-size:12px;line-height:20px;color:#ccccdc;letter-spacing:0.192px;left:767.45px;">14:55</div>
<div class="t" style="top:365.50px;font-size:12px;line-height:20px;color:#ccccdc;letter-spacing:0.192px;left:825.80px;">15:00</div>
<div class="t" style="top:365.50px;font-size:12px;line-height:20px;color:#ccccdc;letter-spacing:0.192px;left:884.15px;">15:05</div>
<div class="t" style="top:365.50px;font-size:12px;line-height:20px;color:#ccccdc;letter-spacing:0.192px;left:942.50px;">15:10</div>
<div class="t" style="top:365.50px;font-size:12px;line-height:20px;color:#ccccdc;letter-spacing:0.192px;left:1000.85px;">15:15</div>
<div class="t" style="top:365.50px;font-size:12px;line-height:20px;color:#ccccdc;letter-spacing:0.192px;left:1059.20px;">15:20</div>
<div class="t" style="top:365.50px;font-size:12px;line-height:20px;color:#ccccdc;letter-spacing:0.192px;left:1117.55px;">15:25</div>
<div class="t" style="top:365.50px;font-size:12px;line-height:20px;color:#ccccdc;letter-spacing:0.192px;left:1175.90px;">15:30</div>
<div class="t" style="top:365.50px;font-size:12px;line-height:20px;color:#ccccdc;letter-spacing:0.192px;left:1234.25px;">15:35</div>
<div class="t" style="top:365.50px;font-size:12px;line-height:20px;color:#ccccdc;letter-spacing:0.192px;left:1292.60px;">15:40</div>
<div class="t" style="top:365.50px;font-size:12px;line-height:20px;color:#ccccdc;letter-spacing:0.192px;left:1350.95px;">15:45</div>
<div class="r" style="left:630.80px;top:394.10px;width:14.30px;height:4.00px;background:#73BF69;border-radius:2px;"></div>
<div class="t" style="top:385.50px;font-size:12px;line-height:20px;color:#ccccdc;letter-spacing:0.721px;left:653.00px;">argocd</div>
<div class="r" style="left:703.60px;top:394.10px;width:14.30px;height:4.00px;background:#F2CC0C;border-radius:2px;"></div>
<div class="t" style="top:385.50px;font-size:12px;line-height:20px;color:#ccccdc;letter-spacing:0.699px;left:725.30px;">backstage</div>
<div class="r" style="left:795.60px;top:394.10px;width:14.30px;height:4.00px;background:#8AB8FF;border-radius:2px;"></div>
<div class="t" style="top:385.50px;font-size:12px;line-height:20px;color:#ccccdc;letter-spacing:0.754px;left:817.80px;">gke-managed-cim</div>
<div class="r" style="left:934.40px;top:394.10px;width:14.30px;height:4.00px;background:#FF780A;border-radius:2px;"></div>
<div class="t" style="top:385.50px;font-size:12px;line-height:20px;color:#ccccdc;letter-spacing:0.773px;left:956.70px;">gmp-system</div>
<div class="r" style="left:1039.70px;top:394.10px;width:14.30px;height:4.00px;background:#F2495C;border-radius:2px;"></div>
<div class="t" style="top:385.50px;font-size:12px;line-height:20px;color:#ccccdc;letter-spacing:0.793px;left:1061.10px;">kong</div>
<div class="r" style="left:1099.90px;top:394.10px;width:14.30px;height:4.00px;background:#5794F2;border-radius:2px;"></div>
<div class="t" style="top:385.50px;font-size:12px;line-height:20px;color:#ccccdc;letter-spacing:0.738px;left:1121.60px;">kube-system</div>
<div class="r" style="left:1207.80px;top:394.10px;width:14.30px;height:4.00px;background:#B877D9;border-radius:2px;"></div>
<div class="t" style="top:385.50px;font-size:12px;line-height:20px;color:#ccccdc;letter-spacing:0.716px;left:1229.00px;">logging</div>
<div class="r" style="left:1282.60px;top:394.10px;width:14.30px;height:4.00px;background:#705DA0;border-radius:2px;"></div>
<div class="t" style="top:385.50px;font-size:12px;line-height:20px;color:#ccccdc;letter-spacing:0.597px;left:1304.60px;">monitoring</div>
<div class="r" style="left:630.90px;top:417.70px;width:14.30px;height:4.00px;background:#37872D;border-radius:2px;"></div>
<div class="t" style="top:409.10px;font-size:12px;line-height:20px;color:#ccccdc;letter-spacing:0.699px;left:653.10px;">opencost</div>
<div class="r" style="left:716.70px;top:417.70px;width:14.30px;height:4.00px;background:#FADE2A;border-radius:2px;"></div>
<div class="t" style="top:409.10px;font-size:12px;line-height:20px;color:#ccccdc;letter-spacing:0.378px;left:739.40px;">scalar</div>
<div class="r" style="left:784.40px;top:417.70px;width:14.30px;height:4.00px;background:#447EBC;border-radius:2px;"></div>
<div class="t" style="top:409.10px;font-size:12px;line-height:20px;color:#ccccdc;letter-spacing:0.697px;left:805.80px;">tracing</div>
<div class="t" style="top:507.70px;font-size:12px;line-height:20px;color:#73bf69;letter-spacing:0.987px;left:630.30px;">$0.0800</div>
<div class="t" style="top:546.25px;font-size:12px;line-height:20px;color:#73bf69;letter-spacing:0.987px;left:630.30px;">$0.0700</div>
<div class="t" style="top:584.80px;font-size:12px;line-height:20px;color:#73bf69;letter-spacing:0.987px;left:630.30px;">$0.0600</div>
<div class="t" style="top:623.35px;font-size:12px;line-height:20px;color:#73bf69;letter-spacing:0.987px;left:630.30px;">$0.0500</div>
<div class="t" style="top:661.90px;font-size:12px;line-height:20px;color:#73bf69;letter-spacing:0.987px;left:630.30px;">$0.0400</div>
<div class="t" style="top:700.45px;font-size:12px;line-height:20px;color:#73bf69;letter-spacing:0.987px;left:630.30px;">$0.0300</div>
<div class="t" style="top:739.00px;font-size:12px;line-height:20px;color:#73bf69;letter-spacing:0.987px;left:630.30px;">$0.0200</div>
<div class="t" style="top:488.50px;font-size:12px;line-height:20px;color:#6e9fff;letter-spacing:0.430px;left:997.80px;text-shadow:0.2px 0 0 currentColor;">Name</div>
<div class="t" style="top:488.50px;font-size:12px;line-height:20px;color:#6e9fff;letter-spacing:0.727px;left:1335.80px;text-shadow:0.2px 0 0 currentColor;">Mean</div>
<svg width="1440" height="810" viewBox="0 0 1440 810"><polyline points="1371.6,497.6 1374.3,500.2 1377,497.6" fill="none" stroke="#6e9fff" stroke-width="1.2"/></svg>
<div class="r" style="left:968.00px;top:509.90px;width:440.00px;height:1.00px;background:#2d2f35;"></div>
<div class="r" style="left:975.30px;top:520.70px;width:14.20px;height:4.00px;background:#F2495C;border-radius:2px;"></div>
<div class="t" style="top:512.90px;font-size:12px;line-height:20px;color:#ccccdc;letter-spacing:0.613px;left:997.70px;">logging / memcached</div>
<div class="t" style="top:512.90px;font-size:12px;line-height:20px;color:#ccccdc;letter-spacing:0.637px;left:1338.70px;">$0.0774</div>
<div class="r" style="left:968.00px;top:533.65px;width:440.00px;height:1.00px;background:#2d2f35;"></div>
<div class="r" style="left:975.30px;top:544.45px;width:14.20px;height:4.00px;background:#F58A5C;border-radius:2px;"></div>
<div class="t" style="top:536.65px;font-size:12px;line-height:20px;color:#ccccdc;letter-spacing:0.571px;left:997.70px;">argocd / sentinel</div>
<div class="t" style="top:536.65px;font-size:12px;line-height:20px;color:#ccccdc;letter-spacing:0.637px;left:1338.70px;">$0.0604</div>
<div class="r" style="left:968.00px;top:557.40px;width:440.00px;height:1.00px;background:#2d2f35;"></div>
<div class="r" style="left:975.30px;top:568.20px;width:14.20px;height:4.00px;background:#BCD459;border-radius:2px;"></div>
<div class="t" style="top:560.40px;font-size:12px;line-height:20px;color:#ccccdc;letter-spacing:0.617px;left:997.70px;">scalar / scalardb-cluster-node</div>
<div class="t" style="top:560.40px;font-size:12px;line-height:20px;color:#ccccdc;letter-spacing:0.637px;left:1338.70px;">$0.0199</div>
<div class="r" style="left:968.00px;top:581.15px;width:440.00px;height:1.00px;background:#2d2f35;"></div>
<div class="r" style="left:975.30px;top:591.95px;width:14.20px;height:4.00px;background:#B4D84F;border-radius:2px;"></div>
<div class="t" style="top:584.15px;font-size:12px;line-height:20px;color:#ccccdc;letter-spacing:0.619px;left:997.70px;">argocd / application-controller</div>
<div class="t" style="top:584.15px;font-size:12px;line-height:20px;color:#ccccdc;letter-spacing:0.637px;left:1338.70px;">$0.0181</div>
<div class="r" style="left:968.00px;top:604.90px;width:440.00px;height:1.00px;background:#2d2f35;"></div>
<div class="r" style="left:975.30px;top:615.70px;width:14.20px;height:4.00px;background:#96D45C;border-radius:2px;"></div>
<div class="t" style="top:607.90px;font-size:12px;line-height:20px;color:#ccccdc;letter-spacing:0.664px;left:997.70px;">kube-system / gke-metadata-server</div>
<div class="t" style="top:607.90px;font-size:12px;line-height:20px;color:#ccccdc;letter-spacing:0.637px;left:1338.70px;">$0.0107</div>
<div class="r" style="left:968.00px;top:628.65px;width:440.00px;height:1.00px;background:#2d2f35;"></div>
<div class="r" style="left:975.30px;top:639.45px;width:14.20px;height:4.00px;background:#8FD45E;border-radius:2px;"></div>
<div class="t" style="top:631.65px;font-size:12px;line-height:20px;color:#ccccdc;letter-spacing:0.683px;left:997.70px;">kube-system / kube-proxy</div>
<div class="t" style="top:631.65px;font-size:12px;line-height:20px;color:#ccccdc;letter-spacing:0.878px;left:1329.70px;">$0.00998</div>
<div class="r" style="left:968.00px;top:652.40px;width:440.00px;height:1.00px;background:#2d2f35;"></div>
<div class="r" style="left:975.30px;top:663.20px;width:14.20px;height:4.00px;background:#8CD35F;border-radius:2px;"></div>
<div class="t" style="top:655.40px;font-size:12px;line-height:20px;color:#ccccdc;letter-spacing:0.601px;left:997.70px;">monitoring / vpa</div>
<div class="t" style="top:655.40px;font-size:12px;line-height:20px;color:#ccccdc;letter-spacing:0.878px;left:1329.70px;">$0.00971</div>
<div class="r" style="left:968.00px;top:676.15px;width:440.00px;height:1.00px;background:#2d2f35;"></div>
<div class="r" style="left:975.30px;top:686.95px;width:14.20px;height:4.00px;background:#8CD35F;border-radius:2px;"></div>
<div class="t" style="top:679.15px;font-size:12px;line-height:20px;color:#ccccdc;letter-spacing:0.619px;left:997.70px;">kube-system / dnsmasq</div>
<div class="t" style="top:679.15px;font-size:12px;line-height:20px;color:#ccccdc;letter-spacing:0.878px;left:1329.70px;">$0.00965</div>
<div class="r" style="left:968.00px;top:699.90px;width:440.00px;height:1.00px;background:#2d2f35;"></div>
<div class="r" style="left:975.30px;top:710.70px;width:14.20px;height:4.00px;background:#88D260;border-radius:2px;"></div>
<div class="t" style="top:702.90px;font-size:12px;line-height:20px;color:#ccccdc;letter-spacing:0.601px;left:997.70px;">backstage / postgresql</div>
<div class="t" style="top:702.90px;font-size:12px;line-height:20px;color:#ccccdc;letter-spacing:0.878px;left:1329.70px;">$0.00896</div>
<div class="r" style="left:968.00px;top:723.65px;width:440.00px;height:1.00px;background:#2d2f35;"></div>
<div class="r" style="left:975.30px;top:734.45px;width:14.20px;height:4.00px;background:#88D260;border-radius:2px;"></div>
<div class="t" style="top:726.65px;font-size:12px;line-height:20px;color:#ccccdc;letter-spacing:0.000px;left:997.70px;">x</div>
<div class="t" style="top:726.65px;font-size:12px;line-height:20px;color:#ccccdc;letter-spacing:42.852px;left:1329.70px;">$0</div>
</div></div>
<svg width="1440" height="810" viewBox="0 0 1440 810" style="position:absolute;left:0;top:0">
<defs><linearGradient id="tg" gradientUnits="userSpaceOnUse" x1="207" y1="0" x2="362" y2="0"><stop offset="0" stop-color="#37a08a"/><stop offset="1" stop-color="#1f9fa9"/></linearGradient></defs>
<polygon points="64.3,750.5 77.0,757.7 77.0,772.7 64.3,780.0 52.5,772.7 52.5,757.7" fill="none" stroke="#2468b4" stroke-width="0.9" stroke-opacity="0.8"/>
<ellipse cx="64.3" cy="750.5" rx="5.4" ry="2.95" transform="rotate(0 64.3 750.5)" fill="#2468b4"/>
<ellipse cx="77.0" cy="757.7" rx="5.4" ry="2.95" transform="rotate(60 77.0 757.7)" fill="#2468b4"/>
<ellipse cx="77.0" cy="772.7" rx="5.4" ry="2.95" transform="rotate(-60 77.0 772.7)" fill="#2468b4"/>
<ellipse cx="64.3" cy="780.0" rx="5.4" ry="2.95" transform="rotate(0 64.3 780.0)" fill="#2468b4"/>
<ellipse cx="52.5" cy="772.7" rx="5.4" ry="2.95" transform="rotate(60 52.5 772.7)" fill="#2468b4"/>
<ellipse cx="52.5" cy="757.7" rx="5.4" ry="2.95" transform="rotate(-60 52.5 757.7)" fill="#2468b4"/>
<line x1="64.3" y1="751" x2="64.3" y2="760" stroke="#2468b4" stroke-width="0.9"/>
<line x1="60.2" y1="767.5" x2="52.8" y2="772.2" stroke="#2468b4" stroke-width="0.9"/>
<line x1="68.4" y1="767.5" x2="76.6" y2="772.2" stroke="#2468b4" stroke-width="0.9"/>
<circle cx="64.3" cy="765.0" r="4.4" fill="none" stroke="#2468b4" stroke-width="1.5"/>
<ellipse cx="64.30" cy="760.30" rx="4.5" ry="2.5" transform="rotate(0 64.30 760.30)" fill="#2468b4"/>
<ellipse cx="60.23" cy="767.35" rx="4.5" ry="2.5" transform="rotate(60 60.23 767.35)" fill="#2468b4"/>
<ellipse cx="68.37" cy="767.35" rx="4.5" ry="2.5" transform="rotate(-60 68.37 767.35)" fill="#2468b4"/>
<text transform="translate(87.79,771.85) scale(0.829,1.000)" font-family="Liberation Sans" font-weight="bold" font-size="19.33" fill="#2a6cb4" stroke="#2a6cb4" stroke-width="0.9" vector-effect="non-scaling-stroke" stroke-linejoin="round">S</text>
<text transform="translate(103.07,771.85) scale(0.854,1.000)" font-family="Liberation Sans" font-weight="bold" font-size="19.33" fill="#2a6cb4" stroke="#2a6cb4" stroke-width="0.9" vector-effect="non-scaling-stroke" stroke-linejoin="round">C</text>
<text transform="translate(119.97,771.85) scale(1.002,1.000)" font-family="Liberation Sans" font-weight="bold" font-size="19.33" fill="#2a6cb4" stroke="#2a6cb4" stroke-width="0.9" vector-effect="non-scaling-stroke" stroke-linejoin="round">A</text>
<text transform="translate(138.42,771.85) scale(0.716,1.000)" font-family="Liberation Sans" font-weight="bold" font-size="19.33" fill="#2a6cb4" stroke="#2a6cb4" stroke-width="0.9" vector-effect="non-scaling-stroke" stroke-linejoin="round">L</text>
<text transform="translate(152.17,771.85) scale(1.002,1.000)" font-family="Liberation Sans" font-weight="bold" font-size="19.33" fill="#2a6cb4" stroke="#2a6cb4" stroke-width="0.9" vector-effect="non-scaling-stroke" stroke-linejoin="round">A</text>
<text transform="translate(170.46,771.85) scale(0.839,1.000)" font-family="Liberation Sans" font-weight="bold" font-size="19.33" fill="#2a6cb4" stroke="#2a6cb4" stroke-width="0.9" vector-effect="non-scaling-stroke" stroke-linejoin="round">R</text>
<text transform="translate(207.40,771.75) scale(0.659,1.000)" font-family="Liberation Mono" font-weight="normal" font-size="21.40" fill="#39a088" stroke="#39a088" stroke-width="0.3" vector-effect="non-scaling-stroke" stroke-linejoin="round">A</text>
<text transform="translate(217.78,771.75) scale(0.698,1.000)" font-family="Liberation Mono" font-weight="normal" font-size="21.40" fill="#37a08b" stroke="#37a08b" stroke-width="0.3" vector-effect="non-scaling-stroke" stroke-linejoin="round">I</text>
<text transform="translate(227.95,770.87) scale(0.719,0.677)" font-family="Liberation Mono" font-weight="normal" font-size="21.85" fill="#35a08d" stroke="#35a08d" stroke-width="0.5" vector-effect="non-scaling-stroke" stroke-linejoin="round">×</text>
<text transform="translate(240.02,771.75) scale(0.815,1.000)" font-family="Liberation Mono" font-weight="normal" font-size="21.40" fill="#33a090" stroke="#33a090" stroke-width="0.3" vector-effect="non-scaling-stroke" stroke-linejoin="round">D</text>
<text transform="translate(251.31,771.75) scale(0.782,0.905)" font-family="Liberation Mono" font-weight="normal" font-size="21.40" fill="#319f92" stroke="#319f92" stroke-width="0.3" vector-effect="non-scaling-stroke" stroke-linejoin="round">e</text>
<text transform="translate(262.89,771.75) scale(0.707,0.905)" font-family="Liberation Mono" font-weight="normal" font-size="21.40" fill="#2f9f95" stroke="#2f9f95" stroke-width="0.3" vector-effect="non-scaling-stroke" stroke-linejoin="round">v</text>
<text transform="translate(273.84,771.75) scale(0.757,1.000)" font-family="Liberation Mono" font-weight="normal" font-size="21.40" fill="#2d9f97" stroke="#2d9f97" stroke-width="0.3" vector-effect="non-scaling-stroke" stroke-linejoin="round">O</text>
<text transform="translate(285.34,771.75) scale(0.756,0.905)" font-family="Liberation Mono" font-weight="normal" font-size="21.40" fill="#2b9f9a" stroke="#2b9f9a" stroke-width="0.3" vector-effect="non-scaling-stroke" stroke-linejoin="round">p</text>
<text transform="translate(296.18,771.75) scale(0.702,0.905)" font-family="Liberation Mono" font-weight="normal" font-size="21.40" fill="#299f9c" stroke="#299f9c" stroke-width="0.3" vector-effect="non-scaling-stroke" stroke-linejoin="round">s</text>
<text transform="translate(310.56,771.75) scale(0.712,1.000)" font-family="Liberation Mono" font-weight="normal" font-size="21.40" fill="#279f9f" stroke="#279f9f" stroke-width="0.3" vector-effect="non-scaling-stroke" stroke-linejoin="round">S</text>
<text transform="translate(320.23,771.75) scale(0.764,0.905)" font-family="Liberation Mono" font-weight="normal" font-size="21.40" fill="#259fa2" stroke="#259fa2" stroke-width="0.3" vector-effect="non-scaling-stroke" stroke-linejoin="round">t</text>
<text transform="translate(330.22,771.75) scale(0.792,0.905)" font-family="Liberation Mono" font-weight="normal" font-size="21.40" fill="#239ea4" stroke="#239ea4" stroke-width="0.3" vector-effect="non-scaling-stroke" stroke-linejoin="round">u</text>
<text transform="translate(341.21,771.75) scale(0.825,0.905)" font-family="Liberation Mono" font-weight="normal" font-size="21.40" fill="#219ea7" stroke="#219ea7" stroke-width="0.3" vector-effect="non-scaling-stroke" stroke-linejoin="round">d</text>
<text transform="translate(352.91,771.75) scale(0.704,0.905)" font-family="Liberation Mono" font-weight="normal" font-size="21.40" fill="#209ea9" stroke="#209ea9" stroke-width="0.3" vector-effect="non-scaling-stroke" stroke-linejoin="round">y</text>
<text transform="translate(1391.98,785.60) scale(0.885,1.000)" font-family="Liberation Sans" font-weight="normal" font-size="27.40" fill="#151515">3</text>
<text transform="translate(1405.59,785.60) scale(0.947,1.000)" font-family="Liberation Sans" font-weight="normal" font-size="27.40" fill="#151515">0</text>
</svg>
</body></html>
